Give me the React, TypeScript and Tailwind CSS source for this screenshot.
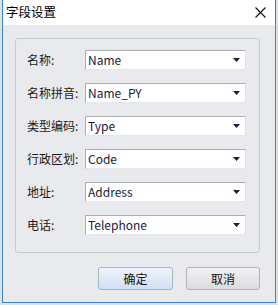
import React from "react";

const rows = [
  { label: "名称:", value: "Name" },
  { label: "名称拼音:", value: "Name_PY" },
  { label: "类型编码:", value: "Type" },
  { label: "行政区划:", value: "Code" },
  { label: "地址:", value: "Address" },
  { label: "电话:", value: "Telephone" },
];

const font = { fontFamily: '"Noto Sans CJK SC", "Noto Sans", sans-serif' };

export default function App() {
  return (
    <div className="w-[278px] h-[305px] bg-[#dde1e6] flex flex-col overflow-hidden" style={font}>
      <div className="ml-[2px] w-[274px] h-[303px] border-x border-b border-[#3a86cc] bg-[#e9eaee] flex flex-col">
        <div className="h-[25px] bg-white flex items-center justify-between pl-[3px] pr-[9px]">
          <span className="text-[12.5px] text-black leading-none">字段设置</span>
          <svg width="11" height="11" viewBox="0 0 11 11">
            <path d="M0.5 0.5 L10.5 10.5 M10.5 0.5 L0.5 10.5" stroke="#111" strokeWidth="1.1" />
          </svg>
        </div>
        <div className="ml-[12px] mt-[13px] w-[245px] h-[215px] border border-[#c9cace] rounded-[3px] flex flex-col gap-[13px] pt-[11px] pl-[11px]">
          {rows.map((r) => (
            <div key={r.label} className="flex items-center h-[20px]">
              <span className="w-[58px] text-[12px] text-[#1a1a1a] leading-none">{r.label}</span>
              <div className="w-[161px] h-[20px] bg-white border border-[#abadb3] border-r-[#dbdfe6] border-b-[#e3e6ec] flex items-center justify-between pl-[2px] pr-[5px]">
                <span className="text-[12px] text-[#1a1a3a] leading-none">{r.value}</span>
                <svg width="7" height="4" viewBox="0 0 7 4">
                  <path d="M0 0 L7 0 L3.5 4 Z" fill="#1c1c3c" />
                </svg>
              </div>
            </div>
          ))}
        </div>
        <div className="flex gap-[13px] mt-[14px] ml-[95px]">
          <button className="w-[75px] h-[23px] rounded-[3px] border border-[#a9b3c4] bg-gradient-to-b from-[#eef3fc] to-[#d3dff5] text-[12px] text-[#111] flex items-center justify-center">确定</button>
          <button className="w-[74px] h-[23px] rounded-[3px] border border-[#b3b3b6] bg-gradient-to-b from-[#f1f1f3] to-[#dcdcdf] text-[12px] text-[#111] flex items-center justify-center">取消</button>
        </div>
      </div>
    </div>
  );
}
